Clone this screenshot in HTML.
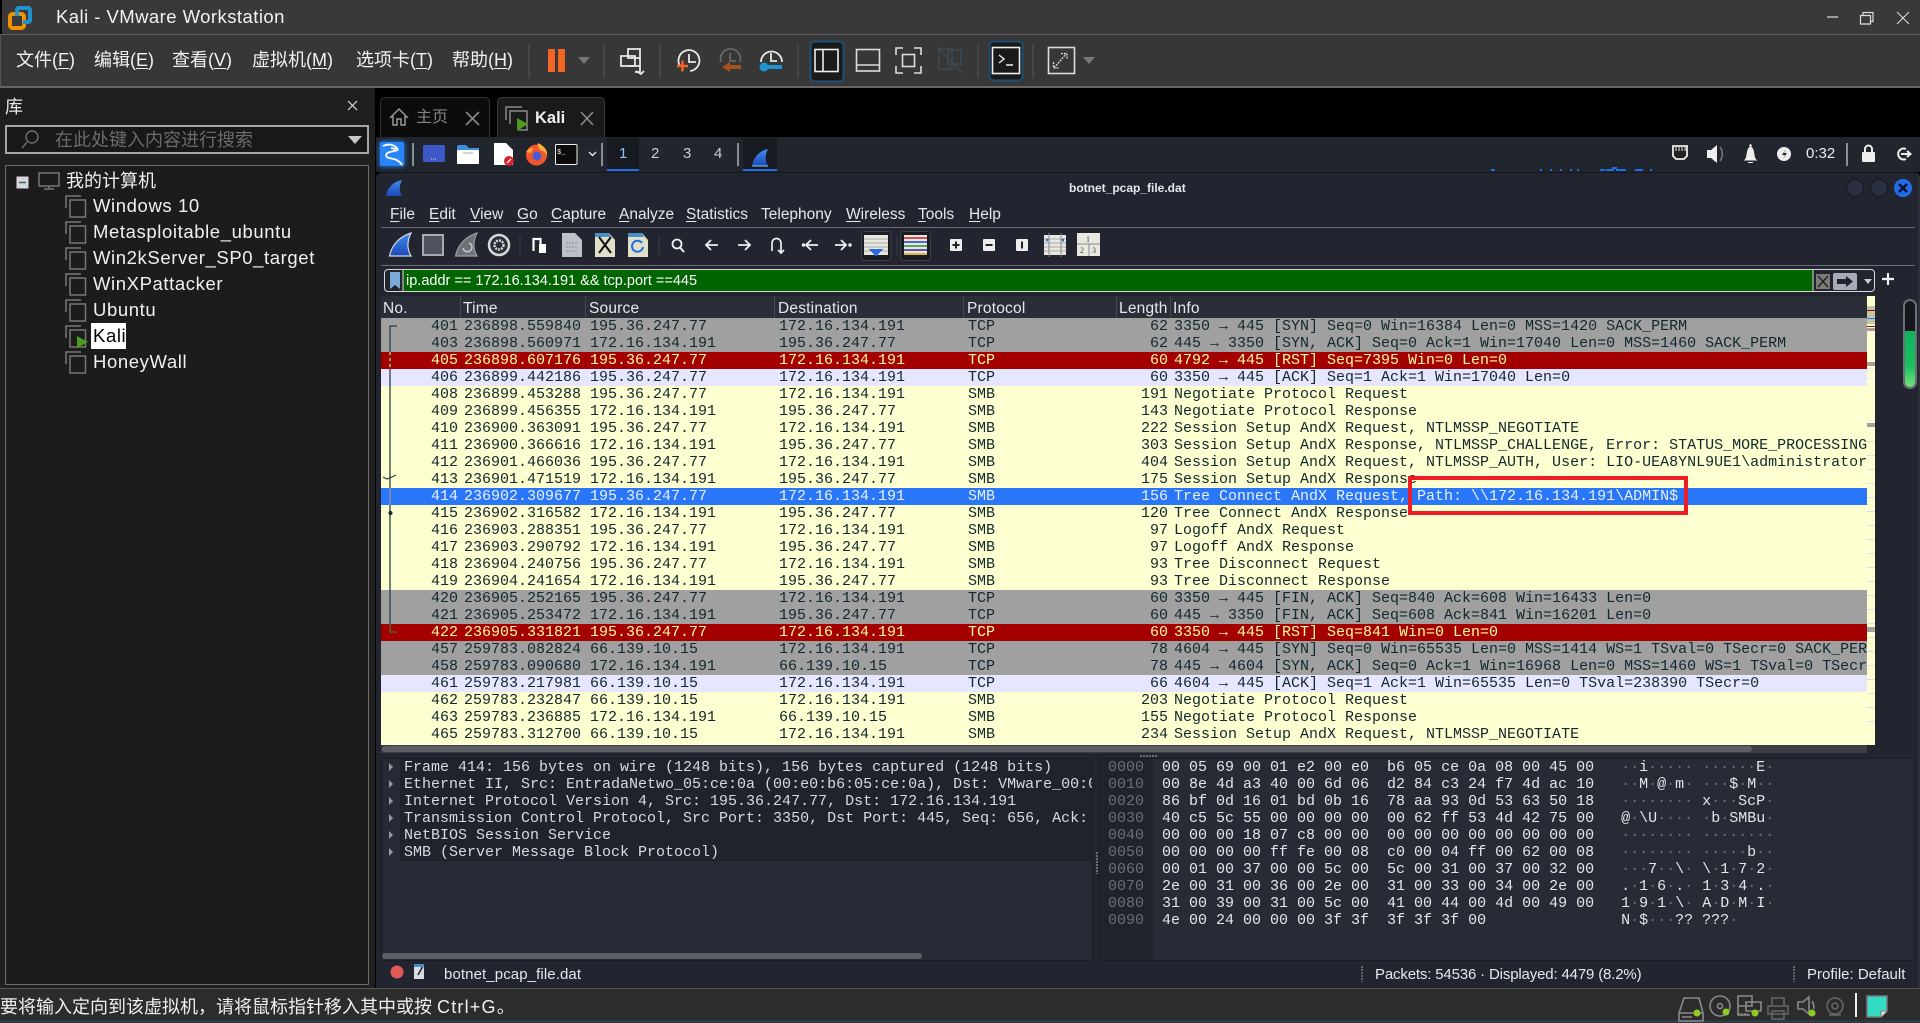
<!DOCTYPE html>
<html lang="zh"><head><meta charset="utf-8"><title>Kali - VMware Workstation</title>
<style>
*{box-sizing:border-box}
html,body{margin:0;padding:0;background:#000}
body{width:1920px;height:1023px;position:relative;overflow:hidden;font-family:"Liberation Sans","Noto Sans CJK SC",sans-serif;color:#fff}
.a{position:absolute}
.t{position:absolute;white-space:pre;line-height:1}
.vm{font-size:18px;color:#f2f2f2}
.lib{font-size:18.5px;letter-spacing:.6px;color:#f0f0f0;left:93px}
.wm{font-size:15.5px;color:#e6e7ea;top:207px}
.wm u,.vm u{text-underline-offset:2px}
.h{font-size:15.5px;color:#e6e7ea;top:301px;letter-spacing:.2px}
.sep{position:absolute;top:296px;width:1px;height:22px;background:#454954}
#rows{position:absolute;left:381px;top:318px;width:1486px;height:427px;background:#feffd0;overflow:hidden}
.r{position:absolute;left:0;width:1486px;height:17px;font:15px/17px "Liberation Mono",monospace;color:#12272e;white-space:pre}
.r span{position:absolute;top:0}
.r span:nth-child(1){right:1409px}
.r span:nth-child(2){left:83px}
.r span:nth-child(3){left:209px}
.r span:nth-child(4){left:398px}
.r span:nth-child(5){left:587px}
.r span:nth-child(6){right:699px}
.r span:nth-child(7){left:793px}
.g{background:#a0a0a0}.b{background:#a40000;color:#fffc9c}.l{background:#e7e6ff}.s{background:#2a76f9;color:#e8f0ff}
.m{font:15px/17px "Liberation Mono",monospace;white-space:pre}
.hex i{font-style:normal;color:#6b6f78}
.hex b{font-weight:normal;color:#6a6e76}
</style></head><body>

<!-- VM chrome backgrounds -->
<div class="a" style="left:0;top:0;width:1920px;height:34px;background:#393939"></div>
<div class="a" style="left:0;top:0;width:2px;height:34px;background:#000"></div>
<div class="a" style="left:0;top:34px;width:1920px;height:54px;background:#373737;border-top:1px solid #5f5f5f;border-bottom:2px solid #666;border-left:1px solid #555"></div>
<div class="a" style="left:0;top:88px;width:375px;height:902px;background:#1f1f1f"></div>
<div class="a" style="left:0;top:988px;width:1920px;height:35px;background:#2c2c2c;border-top:1px solid #555"></div>
<div class="a" style="left:0;top:1020px;width:1920px;height:3px;background:#2d3c42"></div>

<!-- Search / tree boxes -->
<div class="a" style="left:5px;top:125px;width:364px;height:29px;border:2px solid #a5a5a5;background:#181818"></div>
<div class="a" style="left:5px;top:165px;width:364px;height:820px;border:1px solid #6c6c6c;background:#1c1c1c"></div>

<!-- Tabs -->
<div class="a" style="left:380px;top:97px;width:110px;height:40px;background:#0c0c0c;border:1px solid #333;border-bottom:0;border-radius:5px 5px 0 0"></div>
<div class="a" style="left:497px;top:97px;width:108px;height:40px;background:#1a1a1a;border:1px solid #3a3a3a;border-bottom:0;border-radius:5px 5px 0 0"></div>

<!-- Kali desktop -->
<div class="a" style="left:376px;top:137px;width:1544px;height:35px;background:#21252e"></div>
<div class="a" style="left:607px;top:138px;width:32px;height:33px;background:#171a21"></div>
<div class="a" style="left:743px;top:138px;width:34px;height:33px;background:#171a21"></div>
<div class="a" style="left:376px;top:172px;width:1544px;height:816px;background:#222530;border-radius:6px 6px 0 0;border-top:1px solid #14161c;border-right:2px solid #2d3038"></div>

<!-- Wireshark panes -->
<div class="a" style="left:381px;top:227px;width:1534px;height:1px;background:#6b6d74"></div>
<div class="a" style="left:381px;top:265px;width:1534px;height:1px;background:#6b6d74"></div>
<div class="a" style="left:381px;top:296px;width:1486px;height:22px;background:#2a2e38"></div>
<div class="a" style="left:381px;top:745px;width:1486px;height:8px;background:#3a3d45"></div>
<div class="a" style="left:382px;top:746px;width:1370px;height:6px;background:#5c5e63;border-radius:3px"></div>
<div class="a" style="left:381px;top:758px;width:712px;height:203px;background:#272a35;border:1px solid #1c1e26"></div>
<div class="a" style="left:400px;top:759px;width:692px;height:102px;background:#20232c"></div>
<div class="a" style="left:382px;top:953px;width:540px;height:6px;background:#5c5e63;border-radius:3px"></div>
<div class="a" style="left:1098px;top:758px;width:817px;height:203px;background:#282b36;border:1px solid #1c1e26"></div>
<div class="a" style="left:1099px;top:759px;width:54px;height:201px;background:#20232c"></div>

<!-- Minimap -->
<div class="a" style="left:1867px;top:296px;width:8px;height:449px;background:#feffd0">
  <div class="a" style="left:0;top:10px;width:8px;height:18px;background:#c4c4a8"></div>
  <div class="a" style="left:0;top:14px;width:8px;height:1px;background:#a40000"></div>
  <div class="a" style="left:0;top:22px;width:8px;height:1px;background:#2a76f9"></div>
  <div class="a" style="left:0;top:30px;width:8px;height:1px;background:#a40000"></div>
  <div class="a" style="left:0;top:32px;width:8px;height:3px;background:#a0a0a0"></div>
  <div class="a" style="left:0;top:66px;width:8px;height:4px;background:#a0a0a0"></div>
  <div class="a" style="left:0;top:127px;width:8px;height:4px;background:#a0a0a0"></div>
  <div class="a" style="left:0;top:72px;width:8px;height:1px;background:#e7e6ff"></div>
  <div class="a" style="left:0;top:82px;width:8px;height:1px;background:#e7e6ff"></div>
  <div class="a" style="left:0;top:132px;width:8px;height:300px;background:repeating-linear-gradient(#feffd0 0 13px,#dcdcf4 13px 14px)"></div>
  <div class="a" style="left:0;top:331px;width:8px;height:5px;background:#a0a0a0"></div>
</div>

<!-- Scroll thermometer -->
<div class="a" style="left:1903px;top:299px;width:14px;height:90px;border:2px solid #6d7076;border-radius:7px;background:#15171c;overflow:hidden">
  <div class="a" style="left:0;top:30px;width:10px;height:58px;background:linear-gradient(#10b45c 0,#18c060 60%,#7ee57a 100%)"></div>
</div>

<!-- Packet rows -->
<div id="rows">
<div class="r g" style="top:0"><span>401</span><span>236898.559840</span><span>195.36.247.77</span><span>172.16.134.191</span><span>TCP</span><span>62</span><span>3350 → 445 [SYN] Seq=0 Win=16384 Len=0 MSS=1420 SACK_PERM</span></div>
<div class="r g" style="top:17px"><span>403</span><span>236898.560971</span><span>172.16.134.191</span><span>195.36.247.77</span><span>TCP</span><span>62</span><span>445 → 3350 [SYN, ACK] Seq=0 Ack=1 Win=17040 Len=0 MSS=1460 SACK_PERM</span></div>
<div class="r b" style="top:34px"><span>405</span><span>236898.607176</span><span>195.36.247.77</span><span>172.16.134.191</span><span>TCP</span><span>60</span><span>4792 → 445 [RST] Seq=7395 Win=0 Len=0</span></div>
<div class="r l" style="top:51px"><span>406</span><span>236899.442186</span><span>195.36.247.77</span><span>172.16.134.191</span><span>TCP</span><span>60</span><span>3350 → 445 [ACK] Seq=1 Ack=1 Win=17040 Len=0</span></div>
<div class="r" style="top:68px"><span>408</span><span>236899.453288</span><span>195.36.247.77</span><span>172.16.134.191</span><span>SMB</span><span>191</span><span>Negotiate Protocol Request</span></div>
<div class="r" style="top:85px"><span>409</span><span>236899.456355</span><span>172.16.134.191</span><span>195.36.247.77</span><span>SMB</span><span>143</span><span>Negotiate Protocol Response</span></div>
<div class="r" style="top:102px"><span>410</span><span>236900.363091</span><span>195.36.247.77</span><span>172.16.134.191</span><span>SMB</span><span>222</span><span>Session Setup AndX Request, NTLMSSP_NEGOTIATE</span></div>
<div class="r" style="top:119px"><span>411</span><span>236900.366616</span><span>172.16.134.191</span><span>195.36.247.77</span><span>SMB</span><span>303</span><span>Session Setup AndX Response, NTLMSSP_CHALLENGE, Error: STATUS_MORE_PROCESSING_REQUIRED</span></div>
<div class="r" style="top:136px"><span>412</span><span>236901.466036</span><span>195.36.247.77</span><span>172.16.134.191</span><span>SMB</span><span>404</span><span>Session Setup AndX Request, NTLMSSP_AUTH, User: LIO-UEA8YNL9UE1\administrator</span></div>
<div class="r" style="top:153px"><span>413</span><span>236901.471519</span><span>172.16.134.191</span><span>195.36.247.77</span><span>SMB</span><span>175</span><span>Session Setup AndX Response</span></div>
<div class="r s" style="top:170px"><span>414</span><span>236902.309677</span><span>195.36.247.77</span><span>172.16.134.191</span><span>SMB</span><span>156</span><span>Tree Connect AndX Request, Path: \\172.16.134.191\ADMIN$</span></div>
<div class="r" style="top:187px"><span>415</span><span>236902.316582</span><span>172.16.134.191</span><span>195.36.247.77</span><span>SMB</span><span>120</span><span>Tree Connect AndX Response</span></div>
<div class="r" style="top:204px"><span>416</span><span>236903.288351</span><span>195.36.247.77</span><span>172.16.134.191</span><span>SMB</span><span>97</span><span>Logoff AndX Request</span></div>
<div class="r" style="top:221px"><span>417</span><span>236903.290792</span><span>172.16.134.191</span><span>195.36.247.77</span><span>SMB</span><span>97</span><span>Logoff AndX Response</span></div>
<div class="r" style="top:238px"><span>418</span><span>236904.240756</span><span>195.36.247.77</span><span>172.16.134.191</span><span>SMB</span><span>93</span><span>Tree Disconnect Request</span></div>
<div class="r" style="top:255px"><span>419</span><span>236904.241654</span><span>172.16.134.191</span><span>195.36.247.77</span><span>SMB</span><span>93</span><span>Tree Disconnect Response</span></div>
<div class="r g" style="top:272px"><span>420</span><span>236905.252165</span><span>195.36.247.77</span><span>172.16.134.191</span><span>TCP</span><span>60</span><span>3350 → 445 [FIN, ACK] Seq=840 Ack=608 Win=16433 Len=0</span></div>
<div class="r g" style="top:289px"><span>421</span><span>236905.253472</span><span>172.16.134.191</span><span>195.36.247.77</span><span>TCP</span><span>60</span><span>445 → 3350 [FIN, ACK] Seq=608 Ack=841 Win=16201 Len=0</span></div>
<div class="r b" style="top:306px"><span>422</span><span>236905.331821</span><span>195.36.247.77</span><span>172.16.134.191</span><span>TCP</span><span>60</span><span>3350 → 445 [RST] Seq=841 Win=0 Len=0</span></div>
<div class="r g" style="top:323px"><span>457</span><span>259783.082824</span><span>66.139.10.15</span><span>172.16.134.191</span><span>TCP</span><span>78</span><span>4604 → 445 [SYN] Seq=0 Win=65535 Len=0 MSS=1414 WS=1 TSval=0 TSecr=0 SACK_PERM</span></div>
<div class="r g" style="top:340px"><span>458</span><span>259783.090680</span><span>172.16.134.191</span><span>66.139.10.15</span><span>TCP</span><span>78</span><span>445 → 4604 [SYN, ACK] Seq=0 Ack=1 Win=16968 Len=0 MSS=1460 WS=1 TSval=0 TSecr=0 SACK_PERM</span></div>
<div class="r l" style="top:357px"><span>461</span><span>259783.217981</span><span>66.139.10.15</span><span>172.16.134.191</span><span>TCP</span><span>66</span><span>4604 → 445 [ACK] Seq=1 Ack=1 Win=65535 Len=0 TSval=238390 TSecr=0</span></div>
<div class="r" style="top:374px"><span>462</span><span>259783.232847</span><span>66.139.10.15</span><span>172.16.134.191</span><span>SMB</span><span>203</span><span>Negotiate Protocol Request</span></div>
<div class="r" style="top:391px"><span>463</span><span>259783.236885</span><span>172.16.134.191</span><span>66.139.10.15</span><span>SMB</span><span>155</span><span>Negotiate Protocol Response</span></div>
<div class="r" style="top:408px"><span>465</span><span>259783.312700</span><span>66.139.10.15</span><span>172.16.134.191</span><span>SMB</span><span>234</span><span>Session Setup AndX Request, NTLMSSP_NEGOTIATE</span></div>
</div>

<!-- Column header -->
<div class="sep" style="left:460px"></div><div class="sep" style="left:585px"></div><div class="sep" style="left:774px"></div><div class="sep" style="left:963px"></div><div class="sep" style="left:1116px"></div><div class="sep" style="left:1170px"></div>
<div class="t h" style="left:383px">No.</div><div class="t h" style="left:463px">Time</div><div class="t h" style="left:589px">Source</div><div class="t h" style="left:778px">Destination</div><div class="t h" style="left:967px">Protocol</div><div class="t h" style="left:1119px">Length</div><div class="t h" style="left:1173px">Info</div>

<!-- Filter bar -->
<div class="a" style="left:384px;top:269px;width:1491px;height:23px;border:1px solid #d8d8d8;border-radius:4px;background:#222530"></div>
<div class="a" style="left:403px;top:270px;width:1410px;height:21px;background:#006400"></div>
<div class="t" style="left:406px;top:274px;font-size:14.5px;color:#fff">ip.addr == 172.16.134.191 &amp;&amp; tcp.port ==445</div>

<!-- Details -->
<div class="a m" style="left:404px;top:759px;color:#d8dae0;width:688px;overflow:hidden">Frame 414: 156 bytes on wire (1248 bits), 156 bytes captured (1248 bits)
Ethernet II, Src: EntradaNetwo_05:ce:0a (00:e0:b6:05:ce:0a), Dst: VMware_00:00:01 (00:0c:29:00:00:01)
Internet Protocol Version 4, Src: 195.36.247.77, Dst: 172.16.134.191
Transmission Control Protocol, Src Port: 3350, Dst Port: 445, Seq: 656, Ack: 1, Len: 102
NetBIOS Session Service
SMB (Server Message Block Protocol)</div>

<!-- Hex -->
<div class="a m hex" style="left:1108px;top:759px;color:#e4e5e8"><b>0000</b>  00 05 69 00 01 e2 00 e0  b6 05 ce 0a 08 00 45 00   <i>··</i>i<i>·····</i> <i>······</i>E<i>·</i>
<b>0010</b>  00 8e 4d a3 40 00 6d 06  d2 84 c3 24 f7 4d ac 10   <i>··</i>M<i>·</i>@<i>·</i>m<i>·</i> <i>···</i>$<i>·</i>M<i>··</i>
<b>0020</b>  86 bf 0d 16 01 bd 0b 16  78 aa 93 0d 53 63 50 18   <i>········</i> x<i>···</i>ScP<i>·</i>
<b>0030</b>  40 c5 5c 55 00 00 00 00  00 62 ff 53 4d 42 75 00   @<i>·</i>\U<i>····</i> <i>·</i>b<i>·</i>SMBu<i>·</i>
<b>0040</b>  00 00 00 18 07 c8 00 00  00 00 00 00 00 00 00 00   <i>········</i> <i>········</i>
<b>0050</b>  00 00 00 00 ff fe 00 08  c0 00 04 ff 00 62 00 08   <i>········</i> <i>·····</i>b<i>··</i>
<b>0060</b>  00 01 00 37 00 00 5c 00  5c 00 31 00 37 00 32 00   <i>···</i>7<i>··</i>\<i>·</i> \<i>·</i>1<i>·</i>7<i>·</i>2<i>·</i>
<b>0070</b>  2e 00 31 00 36 00 2e 00  31 00 33 00 34 00 2e 00   .<i>·</i>1<i>·</i>6<i>·</i>.<i>·</i> 1<i>·</i>3<i>·</i>4<i>·</i>.<i>·</i>
<b>0080</b>  31 00 39 00 31 00 5c 00  41 00 44 00 4d 00 49 00   1<i>·</i>9<i>·</i>1<i>·</i>\<i>·</i> A<i>·</i>D<i>·</i>M<i>·</i>I<i>·</i>
<b>0090</b>  4e 00 24 00 00 00 3f 3f  3f 3f 3f 00               N<i>·</i>$<i>···</i>?? ???<i>·</i></div>

<!-- VM text -->
<div class="t" style="left:56px;top:8px;font-size:18.5px;letter-spacing:.45px;color:#f2f2f2">Kali - VMware Workstation</div>
<div class="t vm" style="left:16px;top:51px">文件(<u>F</u>)</div>
<div class="t vm" style="left:94px;top:51px">编辑(<u>E</u>)</div>
<div class="t vm" style="left:172px;top:51px">查看(<u>V</u>)</div>
<div class="t vm" style="left:252px;top:51px">虚拟机(<u>M</u>)</div>
<div class="t vm" style="left:356px;top:51px">选项卡(<u>T</u>)</div>
<div class="t vm" style="left:452px;top:51px">帮助(<u>H</u>)</div>
<div class="t" style="left:5px;top:98px;font-size:18px;color:#e8e8e8">库</div>
<div class="t" style="left:55px;top:131px;font-size:18px;color:#6b6b6b">在此处键入内容进行搜索</div>
<div class="t" style="left:66px;top:172px;font-size:18px;color:#f0f0f0">我的计算机</div>
<div class="t lib" style="top:197px">Windows 10</div>
<div class="t lib" style="top:223px">Metasploitable_ubuntu</div>
<div class="t lib" style="top:249px">Win2kServer_SP0_target</div>
<div class="t lib" style="top:275px">WinXPattacker</div>
<div class="t lib" style="top:301px">Ubuntu</div>
<div class="a" style="left:91px;top:323px;width:35px;height:26px;background:#fff"></div>
<div class="t lib" style="top:327px;color:#000">Kali</div>
<div class="t lib" style="top:353px">HoneyWall</div>
<div class="t" style="left:416px;top:110px;font-size:16px;color:#858585">主页</div>
<div class="t" style="left:535px;top:110px;font-size:16.5px;font-weight:bold;color:#f0f0f0">Kali</div>
<div class="t" style="left:0;top:998px;font-size:18px;color:#f0f0f0">要将输入定向到该虚拟机，请将鼠标指针移入其中或按 <span style="letter-spacing:1.2px">Ctrl+G</span>。</div>

<!-- Kali text -->
<div class="t" style="left:619px;top:146px;font-size:15px;color:#8fc0f0">1</div>
<div class="t" style="left:651px;top:146px;font-size:15px;color:#c8ccd4">2</div>
<div class="t" style="left:683px;top:146px;font-size:15px;color:#c8ccd4">3</div>
<div class="t" style="left:714px;top:146px;font-size:15px;color:#c8ccd4">4</div>
<div class="t" style="left:1806px;top:146px;font-size:15px;color:#e8ecf4">0:32</div>
<div class="t" style="left:1069px;top:182px;font-size:12px;font-weight:bold;color:#e6e7ea">botnet_pcap_file.dat</div>

<!-- Wireshark menu -->
<div class="t wm" style="left:390px"><u>F</u>ile</div>
<div class="t wm" style="left:429px"><u>E</u>dit</div>
<div class="t wm" style="left:470px"><u>V</u>iew</div>
<div class="t wm" style="left:517px"><u>G</u>o</div>
<div class="t wm" style="left:551px"><u>C</u>apture</div>
<div class="t wm" style="left:619px"><u>A</u>nalyze</div>
<div class="t wm" style="left:686px"><u>S</u>tatistics</div>
<div class="t wm" style="left:761px">Telephony</div>
<div class="t wm" style="left:846px"><u>W</u>ireless</div>
<div class="t wm" style="left:918px"><u>T</u>ools</div>
<div class="t wm" style="left:969px"><u>H</u>elp</div>

<!-- Wireshark status -->
<div class="t" style="left:444px;top:967px;font-size:15px;letter-spacing:.1px;color:#e6e7ea">botnet_pcap_file.dat</div>
<div class="t" style="left:1375px;top:967px;font-size:15px;letter-spacing:-.16px;color:#e6e7ea">Packets: 54536 · Displayed: 4479 (8.2%)</div>
<div class="t" style="left:1807px;top:967px;font-size:15px;color:#e6e7ea">Profile: Default</div>

<!-- Icons overlay -->
<svg class="a" style="left:0;top:0" width="1920" height="1023" viewBox="0 0 1920 1023" fill="none">
<defs>
<linearGradient id="fin" x1="0" y1="0" x2="0" y2="1"><stop offset="0" stop-color="#3f8cf0"/><stop offset="1" stop-color="#1c48b8"/></linearGradient>
<filter id="glow" x="-30%" y="-30%" width="160%" height="160%"><feGaussianBlur stdDeviation="2"/></filter>
</defs>
<!-- VMware logo -->
<rect x="10" y="14" width="14" height="14" rx="2.500" stroke="#f29100" stroke-width="4"/>
<path d="M17 16v-6a2 2 0 0 1 2-2h9a2 2 0 0 1 2 2v10a2 2 0 0 1-2 2h-5" stroke="#1f93d1" stroke-width="4"/>
<!-- window controls -->
<path d="M1827 17h11" stroke="#ddd" stroke-width="1.200"/>
<path d="M1860.500 15.500h10v8.500h-10zM1863 15.500v-3h10v9h-2.500" stroke="#ddd" stroke-width="1.200"/>
<path d="M1897 12l12 12M1909 12l-12 12" stroke="#ddd" stroke-width="1"/>
<!-- toolbar separators -->
<g stroke="#555"><path d="M529 44v34M604 44v34M660 44v34M798 44v34M978 44v34M1033 44v34"/></g>
<rect x="548" y="49" width="7" height="23" fill="#f26522"/><rect x="558" y="49" width="7" height="23" fill="#f26522"/>
<path d="M578 57h12l-6 7z" fill="#777"/><path d="M1083 57h12l-6 7z" fill="#777"/>
<!-- print-like -->
<path d="M621 56h14v10h-14zM628 49h12v9h-12zM640 56v16h-5" stroke="#e8e8e8" stroke-width="1.800"/>
<path d="M628 66h12" stroke="#e8e8e8" stroke-width="1.800"/><path d="M636 71l5 3 3-3" stroke="#e8e8e8" stroke-width="1.800"/>
<!-- snapshot clocks -->
<g stroke="#e8e8e8" stroke-width="1.800"><path d="M680 66a10.500 10.500 0 1 1 10 5M689 54v8h7"/></g>
<path d="M677 66h11M682.500 60.500v11" stroke="#f26522" stroke-width="2.400"/>
<g stroke="#666" stroke-width="1.800"><path d="M721 62a10 10 0 1 1 19 0M730 53v8h6"/></g>
<path d="M741 67h-15" stroke="#a85020" stroke-width="4"/><path d="M730 62l-8 5 8 5z" fill="#a85020"/>
<g stroke="#e8e8e8" stroke-width="1.800"><path d="M761 62a10.500 10.500 0 1 1 21 0M771 53v8h6"/></g>
<path d="M764 67h18" stroke="#1f93d1" stroke-width="4"/><circle cx="764" cy="67" r="4.500" fill="#1f93d1"/>
<!-- view icons -->
<rect x="810.500" y="41.500" width="33" height="40" rx="4" fill="#1a1a1a" stroke="#1f4e73" stroke-width="2"/>
<rect x="815" y="49.500" width="23" height="22" stroke="#eee" stroke-width="1.600"/><path d="M823 49v23" stroke="#eee" stroke-width="1.600"/>
<rect x="856.500" y="49.500" width="23" height="21.500" stroke="#ddd" stroke-width="1.600"/><path d="M856 65h24" stroke="#ddd" stroke-width="1.600"/>
<path d="M896 55v-7h7M914 48h7v7M921 66v7h-7M903 73h-7v-7" stroke="#ddd" stroke-width="1.600"/><rect x="902.500" y="54.500" width="12" height="12" stroke="#ddd" stroke-width="1.600"/>
<rect x="939" y="49" width="13" height="20" stroke="#3d4a55" stroke-width="1.500"/><rect x="948" y="50" width="13" height="14" stroke="#3d4a55" stroke-width="1.500"/>
<path d="M937 47l26 26" stroke="#3d4a55" stroke-width="1.500"/>
<rect x="989.500" y="41.500" width="33" height="39" rx="4" fill="#1a1a1a" stroke="#1f4e73" stroke-width="2"/>
<rect x="992.500" y="47.500" width="27" height="26" fill="#1a1a1a" stroke="#eee" stroke-width="1.600"/>
<path d="M999 55l5 4-5 4M1006 65h7" stroke="#eee" stroke-width="1.400"/>
<rect x="1048.500" y="47.500" width="26" height="26" stroke="#ddd" stroke-width="1.600"/>
<path d="M1054 68l12-14M1061 53.500h6v6M1053.500 62v6h6" stroke="#ddd" stroke-width="1.300" stroke-dasharray="2 1"/>
<!-- library -->
<path d="M348 101l9 9M357 101l-9 9" stroke="#ddd" stroke-width="1.200"/>
<circle cx="32" cy="137" r="6" stroke="#6b6b6b" stroke-width="1.500"/><path d="M27 142l-5 6" stroke="#6b6b6b" stroke-width="1.500"/>
<path d="M348 136h14l-7 8z" fill="#c8c8c8"/>
<rect x="16.500" y="176.500" width="12" height="12" fill="#d8d8d8"/><path d="M19 182.500h7" stroke="#3a5a90" stroke-width="1.500"/>
<rect x="39" y="173" width="20" height="13" stroke="#777" stroke-width="1.500"/><path d="M49 186v3M44 189h10" stroke="#777" stroke-width="1.500"/>
<!-- VM item icons -->
<g stroke="#777" stroke-width="1.500">
<path d="M66 208v-12h15M70 212v-12h15.500v17h-15.500v-5z"/>
<path d="M66 234v-12h15M70 238v-12h15.500v17h-15.500v-5z"/>
<path d="M66 260v-12h15M70 264v-12h15.500v17h-15.500v-5z"/>
<path d="M66 286v-12h15M70 290v-12h15.500v17h-15.500v-5z"/>
<path d="M66 312v-12h15M70 316v-12h15.500v17h-15.500v-5z"/>
<path d="M66 338v-12h15M70 342v-12h15.500v17h-15.500v-5z"/>
<path d="M66 364v-12h15M70 368v-12h15.500v17h-15.500v-5z"/>
</g>
<path d="M77 336l11 6-11 6z" fill="#4c9a1e"/>
<!-- tabs -->
<path d="M390 118l9-9 9 9M393 116v9h4v-6h4v6h4v-9" stroke="#9a9a9a" stroke-width="1.500"/>
<path d="M466 112l13 13M479 112l-13 13M581 112l12 13M593 112l-12 13" stroke="#8a8a8a" stroke-width="1.600"/>
<path d="M506 120v-13h16M510 124v-13h17v19h-8" stroke="#8a8a8a" stroke-width="1.500"/>
<path d="M517 118l11 6-11 7z" fill="#4c9a1e"/>
<!-- Kali panel -->
<rect x="379" y="141" width="26" height="26" rx="3" fill="#1f8cff" filter="url(#glow)" opacity=".7"/>
<rect x="380" y="142" width="24" height="24" rx="1" fill="#2a86f8"/>
<path d="M383 146c6-3 13-1 15 4M398 150l-8 2c-5 1-5 5-1 6 6 1 10 2 13 7M391 148l5 1" stroke="#fff" stroke-width="1.800"/>
<path d="M413 143v23M602 143v23M738 143v23" stroke="#8b8e94" stroke-width="2"/>
<rect x="423" y="145" width="22" height="17" rx="1" fill="#3f58c8"/><path d="M431 159h6" stroke="#ddd" stroke-width="1" stroke-dasharray="1 1"/>
<path d="M457 147a2 2 0 0 1 2-2h7l3 3h10v2h-22z" fill="#3d8de0"/><rect x="457" y="150" width="22" height="14" rx="1" fill="#fff"/><path d="M463 153h10" stroke="#aaa"/>
<path d="M494 143h12l7 7v15h-19z" fill="#fff"/><circle cx="509" cy="161" r="5" fill="#d8202a"/><path d="M507 163l4-4" stroke="#fff" stroke-width="1.300"/>
<circle cx="536.500" cy="155" r="10.500" fill="#f0572a"/>
<path d="M538 143c6 3 10 7 9 13-1-3-3-5-7-6-1-3-3-4-2-7z" fill="#fbb034"/>
<path d="M526 152c2-3 5-4 8-4-2 2-3 3-3 5z" fill="#fbb034"/>
<circle cx="537" cy="156" r="4.500" fill="#4a5ad8"/>
<rect x="555.500" y="144.500" width="21.500" height="20" rx="1" fill="#0b0b0b" stroke="#eee"/><text x="557" y="154" font-family="Liberation Mono,monospace" font-size="7" fill="#eee">$_</text>
<path d="M589 152l3.500 3.500 3.500-3.500" stroke="#ddd" stroke-width="1.500"/>
<rect x="607" y="169" width="32" height="2" fill="#1f6de8"/><rect x="743" y="169" width="34" height="2" fill="#1f6de8"/>
<path d="M752 166c1-7 6-15 16-17-3 6-3 12 0 17z" fill="url(#fin)"/><path d="M752 166h16" stroke="#9cd" stroke-width="1"/>
<path d="M1491 170h4M1540 170h2M1550 170h2M1560 170h2M1570 170h2M1577 170h2M1600 170h5M1606 170h8M1612 168h5M1616 170h10M1635 170h8M1650 170h2" stroke="#1f6de8" stroke-width="2"/>
<!-- tray -->
<path d="M1673 146h14v10l-3 3h-8l-3-3z" stroke="#eee" stroke-width="1.800" fill="#222"/><path d="M1676 147v4M1679 147v4M1682 147v4M1685 147v4" stroke="#eee" stroke-width="1"/>
<path d="M1707 150h4l6-5v18l-6-5h-4z" fill="#eee"/><path d="M1720 147c3 4 3 10 0 14" stroke="#777" stroke-width="1.500"/>
<path d="M1745 160c3-2 1-11 5.500-13 4.500 2 2.500 11 5.500 13z" fill="#eee" stroke="#eee" stroke-width="1"/><circle cx="1750.500" cy="145.500" r="1.300" fill="#eee"/><path d="M1748 162.500h5" stroke="#eee"/>
<circle cx="1784" cy="154" r="7" fill="#eee"/><path d="M1786 149l-4 6h3l-2 4 4-6h-3z" fill="#222530"/>
<path d="M1847 143v23" stroke="#8b8e94" stroke-width="2"/>
<rect x="1862" y="152" width="13" height="10" rx="1" fill="#eee"/><path d="M1865 152v-3a3.500 3.500 0 0 1 7 0v3" stroke="#eee" stroke-width="2"/>
<path d="M1906 149a5.500 5.500 0 1 0 0 10" stroke="#eee" stroke-width="2"/><path d="M1901 154h9M1907 151l3.500 3-3.500 3" stroke="#eee" stroke-width="2"/>
<!-- window buttons -->
<circle cx="1855" cy="188" r="8.500" fill="#2b3040" stroke="#14161c"/>
<circle cx="1879" cy="188" r="8.500" fill="#2b3040" stroke="#14161c"/>
<circle cx="1903" cy="188" r="9" fill="#1f6de8"/><path d="M1899 184l8 8M1907 184l-8 8" stroke="#08122a" stroke-width="2.500"/>
<!-- shark in title -->
<path d="M386 196c1-7 6-14 16-16-3 6-3 11 0 16z" fill="url(#fin)"/>
<!-- Wireshark toolbar -->
<path d="M389.500 256c2-10 9-19 21.500-23-4 8-4 16 0 23z" fill="url(#fin)" stroke="#d8d8e0" stroke-width="1.200"/>
<rect x="423" y="235" width="20" height="20" fill="#4f525e" stroke="#a8aab0" stroke-width="2"/>
<path d="M455.500 256c2-10 9-19 21.500-23-4 8-4 16 0 23z" fill="#6e7076" stroke="#9a9ca2" stroke-width="1.200"/>
<path d="M463 248a4.500 4.500 0 1 0 6-5" stroke="#c8c8d0" stroke-width="1.500"/>
<circle cx="499" cy="245" r="10" fill="#2b2e38" stroke="#d8d8d8" stroke-width="2.500"/><circle cx="499" cy="245" r="4.500" stroke="#d8d8d8" stroke-width="2.400" stroke-dasharray="2 1"/>
<path d="M520 236v19M659 236v19" stroke="#3a3d46"/>
<path d="M533.500 251v-12h7v6" stroke="#fff" stroke-width="2.200"/><rect x="539" y="244" width="7" height="9" fill="#fff"/>
<path d="M562 233h13l7 7v17h-20z" fill="#bcc0c8"/><path d="M566 243h12M566 247h12M566 251h12" stroke="#8a8e98" stroke-dasharray="2 1"/>
<path d="M595 233h14l6 7v17h-20z" fill="#e0e0c8"/><path d="M595 233h14l2 4h-16z" fill="#4a90c8"/><path d="M599 237l12 16M611 237l-12 16" stroke="#111" stroke-width="2"/>
<path d="M628 233h14l6 7v17h-20z" fill="#e0e0c8"/><path d="M628 233h14l2 4h-16z" fill="#4a90c8"/><path d="M642 243a5.500 5.500 0 1 0 1 4" stroke="#1f6de8" stroke-width="2"/>
<circle cx="677" cy="244" r="4.500" stroke="#eee" stroke-width="1.800"/><path d="M680.500 248l3.500 4" stroke="#eee" stroke-width="2"/>
<path d="M718 245h-12M711 240l-5 5 5 5" stroke="#eee" stroke-width="1.800"/>
<path d="M738 245h12M745 240l5 5-5 5" stroke="#eee" stroke-width="1.800"/>
<path d="M772 251v-8a4.500 4.500 0 0 1 9 0v9M778 250l3 3 3-3" stroke="#eee" stroke-width="1.700"/>
<circle cx="803.500" cy="245" r="1.700" fill="#eee"/><path d="M818 245h-11M811 240l-5 5 5 5" stroke="#eee" stroke-width="1.800"/>
<circle cx="850" cy="245" r="1.700" fill="#eee"/><path d="M835 245h11M841 240l5 5-5 5" stroke="#eee" stroke-width="1.800"/>
<rect x="861.500" y="231.500" width="29.500" height="29" rx="3" fill="#1a1c24" stroke="#3d414c"/>
<rect x="864" y="235" width="24" height="20" fill="#e8e8e0"/><path d="M864 239h24M864 243h24M864 247h24M864 251h24" stroke="#a8a8a0"/><path d="M871 250h10l-5 5z" fill="#2a6be0" stroke="#2a6be0" stroke-width="2"/>
<rect x="900.500" y="231.500" width="30" height="29" rx="3" fill="#1a1c24" stroke="#3d414c"/>
<rect x="904" y="235" width="23" height="20" fill="#e8e8e0"/><path d="M904 238h23" stroke="#d02020" stroke-width="1.500"/><path d="M904 242h23" stroke="#2040c0" stroke-width="1.500"/><path d="M904 246h23" stroke="#209040" stroke-width="1.500"/><path d="M904 250h23" stroke="#402090" stroke-width="1.500"/><path d="M904 254h23" stroke="#d8a020" stroke-width="1.500"/>
<path d="M897 236v19" stroke="#3a3d46"/>
<rect x="950" y="239" width="12" height="12" rx="1" fill="#eee"/><path d="M952.500 245h7M956 241.500v7" stroke="#222" stroke-width="2"/>
<rect x="983" y="239" width="12" height="12" rx="1" fill="#eee"/><path d="M985.500 245h7" stroke="#222" stroke-width="2"/>
<rect x="1016" y="239" width="12" height="12" rx="1" fill="#eee"/><path d="M1022 241.500v7" stroke="#222" stroke-width="2"/>
<rect x="1044" y="235" width="22" height="20" fill="#e8e8e0"/><path d="M1044 239h22M1044 243h22M1044 247h22M1044 251h22" stroke="#aaa"/><path d="M1049 233v24M1061 233v24" stroke="#888"/><path d="M1046 238l3 2-3 2zM1064 238l-3 2 3 2z" fill="#2a6be0"/>
<rect x="1077" y="233" width="23" height="23" fill="#e8e8e0"/><path d="M1077 244h23M1089 244v12" stroke="#888"/>
<g font-family="Liberation Serif,serif" font-size="8" fill="#444"><text x="1086" y="242">1</text><text x="1080" y="253">2</text><text x="1092" y="253">3</text></g>
<!-- bookmark & filter buttons -->
<path d="M390 272h10v17l-5-4-5 4z" fill="#7aaad8"/>
<path d="M403 269v23M1813 269v23" stroke="#ddd"/>
<rect x="1816" y="274" width="14" height="15" fill="#7d7d78"/><path d="M1818 276l10 11M1828 276l-10 11" stroke="#222" stroke-width="1.500"/>
<rect x="1833" y="273" width="24" height="17" rx="2" fill="#a8abb6"/><path d="M1837 279h9v-3l7 5.500-7 5.500v-3h-9z" fill="#20232c"/>
<path d="M1864 279h8l-4 5z" fill="#ccc"/>
<path d="M1882 279h12M1888 273v12" stroke="#eee" stroke-width="2.200"/>
<!-- packet graph -->
<path d="M397 326h-7v306h7" stroke="#2a3b46" stroke-width="1.300"/>
<path d="M390 352v17" stroke="#fffc9c" stroke-width="1" stroke-dasharray="3 3"/>
<path d="M390 624v8h7" stroke="#5a6a30" stroke-width="1.300"/>
<path d="M383 477l4 2 3-1 6-3" stroke="#2a3b46" stroke-width="1.200"/>
<circle cx="390.500" cy="513" r="2" fill="#12272e"/>
<path d="M390 488v17" stroke="#9aa0a8" stroke-width="1.300"/>
<!-- red annotation box -->
<rect x="1410" y="478" width="276" height="35" stroke="#ee1c25" stroke-width="4"/>
<!-- tree arrows -->
<g fill="#9a9ca2"><path d="M389 763l4 4-4 4z"/><path d="M389 780l4 4-4 4z"/><path d="M389 797l4 4-4 4z"/><path d="M389 814l4 4-4 4z"/><path d="M389 831l4 4-4 4z"/><path d="M389 848l4 4-4 4z"/></g>
<!-- grip -->
<path d="M1140 756h17" stroke="#6b6e76" stroke-width="2" stroke-dasharray="2 1"/>
<path d="M1097 852v22" stroke="#6b6e76" stroke-width="2" stroke-dasharray="2 1"/>
<!-- status -->
<circle cx="397" cy="972" r="6.500" fill="#e05a5a"/>
<path d="M414 964h10v15h-10z" fill="#d8dcdc"/><path d="M418 975l5-9" stroke="#224" stroke-width="1.500"/><path d="M414 964h10v3h-10z" fill="#4a90c8"/>
<path d="M1362 966v16M1794 966v16" stroke="#777" stroke-width="1.500" stroke-dasharray="2 1"/>
<!-- VM bottom icons -->
<g stroke="#8a8a8a" stroke-width="1.600">
<path d="M1684 998h15l4 15v8h-24v-8zM1679 1013h24M1682 1017h10"/>
<circle cx="1720" cy="1006" r="10"/><circle cx="1720" cy="1006" r="2.500"/>
<path d="M1738 996h14v10h-14zM1746 1002h15v9h-15zM1738 1006v9h12"/><path d="M1738 1014h10" stroke-dasharray="2 1"/>
<path d="M1768 1006h20v8h-20zM1772 1006v-8h12v8M1772 1011h12v8h-12z" stroke="#666"/>
<path d="M1798 1002h5l6-5v17l-6-5h-5z"/><path d="M1812 1001c2 3 2 6 2 8"/>
<circle cx="1835" cy="1006" r="8" stroke="#666"/><circle cx="1835" cy="1006" r="3" stroke="#666"/><path d="M1829 1015h12" stroke="#666"/>
</g>
<circle cx="1697" cy="1013" r="3.500" fill="#8ccc24"/><circle cx="1726" cy="1012" r="3.500" fill="#8ccc24"/><circle cx="1755" cy="1013" r="3.500" fill="#8ccc24"/><circle cx="1812" cy="1013" r="3.500" fill="#8ccc24"/>
<path d="M1856 993v24" stroke="#f0f0f0" stroke-width="2"/>
<path d="M1867 996h20v15l-6 6h-14z" fill="#34dcc6" stroke="#7a7a7a" stroke-width="1.500"/><path d="M1881 1017v-6h6" stroke="#7a7a7a" fill="#d8e0dc" stroke-width="1"/>
</svg>
</body></html>
